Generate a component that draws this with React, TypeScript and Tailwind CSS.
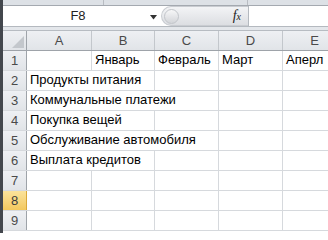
import React from 'react';

const cols = [
    { key: 'A', w: 'w-[65px]' },
    { key: 'B', w: 'w-[63px]' },
    { key: 'C', w: 'w-[64px]' },
    { key: 'D', w: 'w-[64px]' },
    { key: 'E', w: 'w-[64px]' },
];

// text rows: label spans from column A into the empty cells to its right
const rows: { n: number; text?: string; span?: string; month?: boolean; active?: boolean }[] = [
    { n: 1, month: true },
    { n: 2, text: 'Продукты питания', span: 'w-[128px]' },
    { n: 3, text: 'Коммунальные платежи', span: 'w-[192px]' },
    { n: 4, text: 'Покупка вещей', span: 'w-[128px]' },
    { n: 5, text: 'Обслуживание автомобиля', span: 'w-[192px]' },
    { n: 6, text: 'Выплата кредитов', span: 'w-[128px]' },
    { n: 7 },
    { n: 8, active: true },
    { n: 9 },
];

const months = ['', 'Январь', 'Февраль', 'Март', 'Аперл'];

function RowHead({ n, active }: { n: number; active?: boolean }) {
    return (
        <div
            className={
                'w-[24px] shrink-0 flex items-center justify-center border-r text-[13px] ' +
                (active
                    ? 'bg-gradient-to-b from-[#fbe39b] to-[#f3c85d] border-[#d9a83a] text-[#3c3c3c]'
                    : 'bg-gradient-to-b from-[#eef0f3] to-[#e1e4e8] border-[#9ea3a9] text-[#4a4a4a]')
            }
        >
            {n}
        </div>
    );
}

export default function App() {
    return (
        <div className="w-[328px] h-[233px] overflow-hidden flex bg-white font-['Liberation_Sans',Arial,sans-serif] text-black">
            {/* dark window edge */}
            <div className="w-[3px] shrink-0 bg-[#43474d]" />

            <div className="flex-1 min-w-0 flex flex-col">
                {/* ribbon bottom strip */}
                <div className="h-[6px] shrink-0 flex bg-[#dde1e6] border-b border-[#a4a9b0]">
                    <div className="w-[101px] shrink-0 border-r border-[#b8bcc2]" />
                    <div className="w-[144px] shrink-0 border-r border-[#b8bcc2]" />
                    <div className="flex-1" />
                </div>

                {/* formula bar */}
                <div className="h-[21px] shrink-0 flex bg-white border-b border-[#b4b9bf]">
                    <div className="w-[158px] shrink-0 flex items-center relative">
                        <span className="w-[150px] text-center text-[13px] text-[#222]">F8</span>
                        <svg width="8" height="5" viewBox="0 0 8 5" className="absolute left-[147px] top-[9px]">
                            <path d="M0 0 H7 L3.5 4.5 Z" fill="#333" />
                        </svg>
                    </div>
                    <div className="w-[87px] shrink-0 flex items-center rounded-l-full bg-gradient-to-b from-[#f3f4f6] to-[#dcdee2] border-y border-l border-[#c9ccd1]">
                        <div className="ml-[2px] w-[15px] h-[15px] rounded-full bg-gradient-to-b from-[#f7f7f8] to-[#d3d5d9] border border-[#c2c5ca]" />
                        <span className="ml-auto mr-[7px] font-['Liberation_Serif',serif] italic text-[#222] text-[14px] leading-none">
                            f<span className="text-[10px]">x</span>
                        </span>
                    </div>
                    <div className="w-px shrink-0 bg-[#b4b9bf]" />
                    <div className="flex-1" />
                </div>

                {/* gap above the grid */}
                <div className="h-[4px] shrink-0 bg-[#e4e7eb] border-b border-[#b7bcc2]" />

                {/* column headers */}
                <div className="h-[20px] shrink-0 flex border-b border-[#9ea3a9] bg-gradient-to-b from-[#eef0f3] to-[#e1e4e8]">
                    <div className="w-[24px] shrink-0 border-r border-[#9ea3a9] relative">
                        <svg width="12" height="12" viewBox="0 0 12 12" className="absolute left-[9px] top-[5px]">
                            <path d="M12 0 V12 H0 Z" fill="#c3c7cc" />
                        </svg>
                    </div>
                    {cols.map((c) => (
                        <div
                            key={c.key}
                            className={c.w + ' shrink-0 flex items-center justify-center border-r border-[#c3c7cc] text-[13px] text-[#4a4a4a]'}
                        >
                            {c.key}
                        </div>
                    ))}
                </div>

                {/* cells */}
                {rows.map((r) => (
                    <div key={r.n} className="h-[20px] shrink-0 flex border-b border-[#d6d9dd]">
                        <RowHead n={r.n} active={r.active} />
                        {r.month &&
                            cols.map((c, i) => (
                                <div
                                    key={c.key}
                                    className={c.w + ' shrink-0 flex items-end pb-[1px] pl-[3px] border-r border-[#d6d9dd] text-[13px] whitespace-nowrap overflow-hidden'}
                                >
                                    {months[i]}
                                </div>
                            ))}
                        {r.text && (
                            <>
                                <div className={r.span + ' shrink-0 flex items-end pb-[1px] pl-[3px] border-r border-[#d6d9dd] text-[13px] whitespace-nowrap'}>
                                    {r.text}
                                </div>
                                {(r.span === 'w-[128px]' ? cols.slice(2) : cols.slice(3)).map((c) => (
                                    <div key={c.key} className={c.w + ' shrink-0 border-r border-[#d6d9dd]'} />
                                ))}
                            </>
                        )}
                        {!r.month &&
                            !r.text &&
                            cols.map((c) => <div key={c.key} className={c.w + ' shrink-0 border-r border-[#d6d9dd]'} />)}
                    </div>
                ))}
            </div>
        </div>
    );
}
